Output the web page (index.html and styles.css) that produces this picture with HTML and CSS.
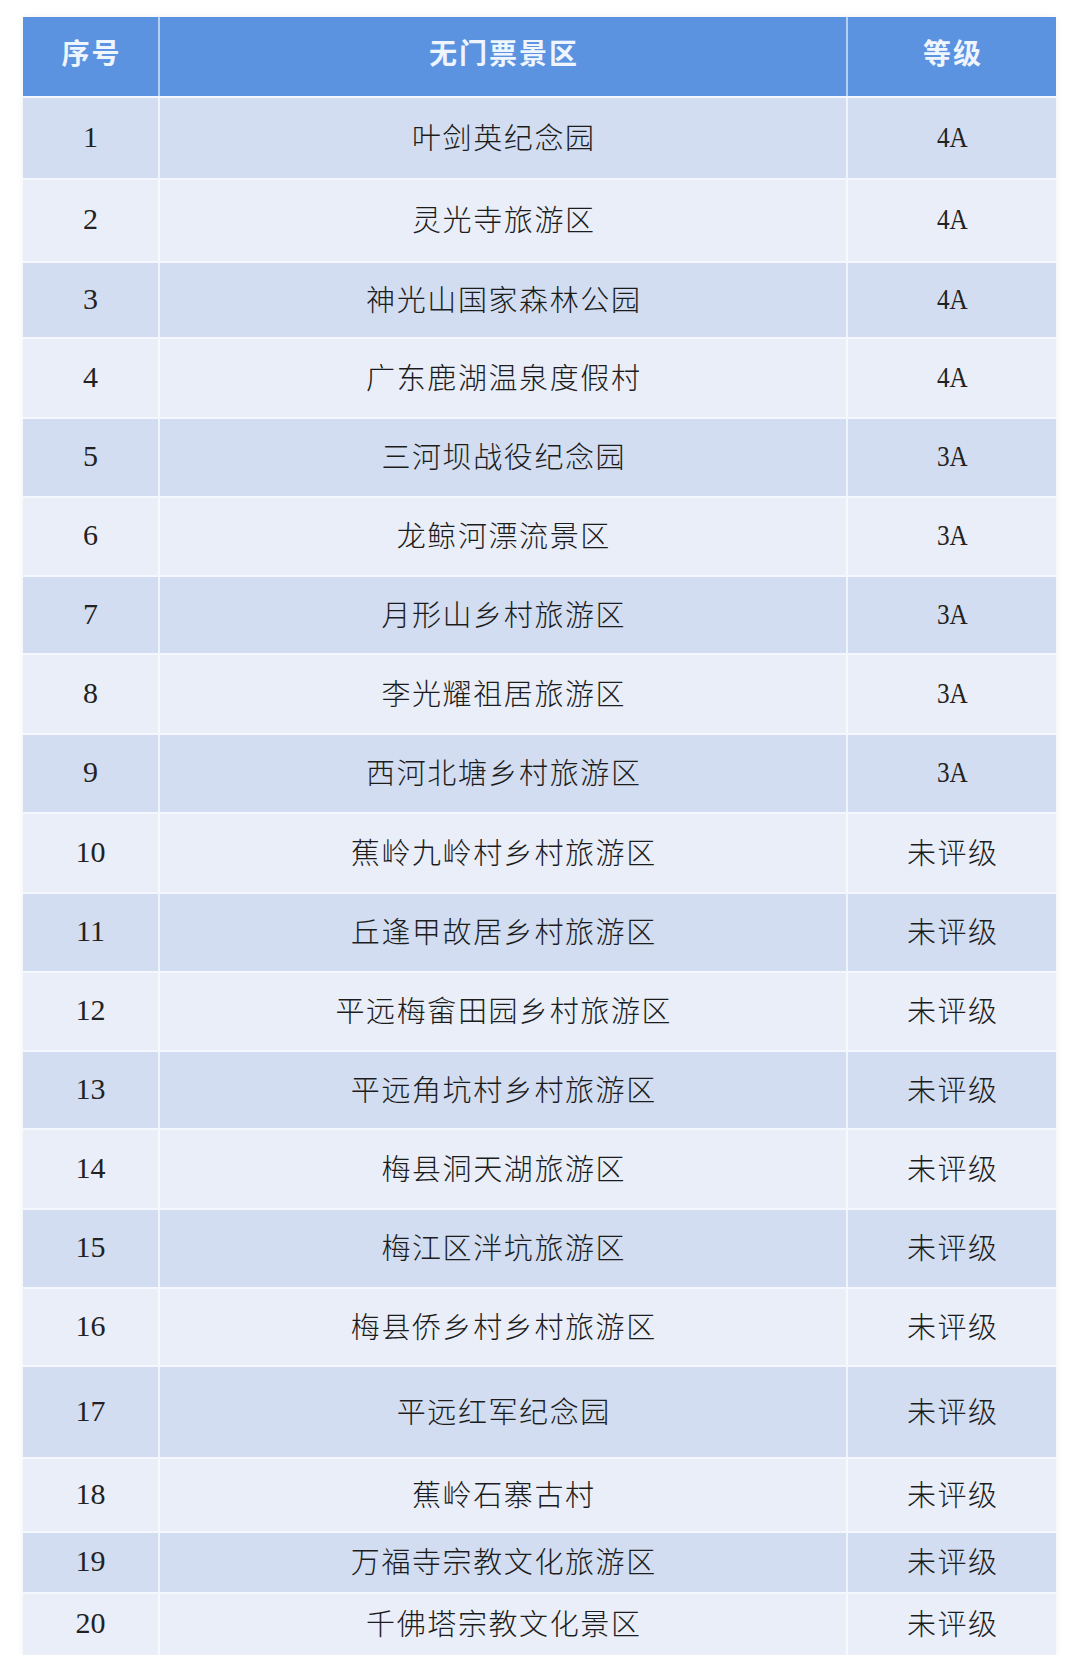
FILE: index.html
```html
<!DOCTYPE html>
<html lang="zh-CN">
<head>
<meta charset="utf-8">
<title>无门票景区</title>
<link rel="stylesheet" href="styles.css">
</head>
<body>
<div class="page">
  <div class="table">
    <div class="row head">
      <div class="cell">序号</div>
      <div class="cell">无门票景区</div>
      <div class="cell">等级</div>
    </div>
    <div class="row dark r1"><div class="cell num">1</div><div class="cell name">叶剑英纪念园</div><div class="cell lv"><span class="lat">4A</span></div></div>
    <div class="row light r2"><div class="cell num">2</div><div class="cell name">灵光寺旅游区</div><div class="cell lv"><span class="lat">4A</span></div></div>
    <div class="row dark r3"><div class="cell num">3</div><div class="cell name">神光山国家森林公园</div><div class="cell lv"><span class="lat">4A</span></div></div>
    <div class="row light r4"><div class="cell num">4</div><div class="cell name">广东鹿湖温泉度假村</div><div class="cell lv"><span class="lat">4A</span></div></div>
    <div class="row dark r5"><div class="cell num">5</div><div class="cell name">三河坝战役纪念园</div><div class="cell lv"><span class="lat">3A</span></div></div>
    <div class="row light r6"><div class="cell num">6</div><div class="cell name">龙鲸河漂流景区</div><div class="cell lv"><span class="lat">3A</span></div></div>
    <div class="row dark r7"><div class="cell num">7</div><div class="cell name">月形山乡村旅游区</div><div class="cell lv"><span class="lat">3A</span></div></div>
    <div class="row light r8"><div class="cell num">8</div><div class="cell name">李光耀祖居旅游区</div><div class="cell lv"><span class="lat">3A</span></div></div>
    <div class="row dark r9"><div class="cell num">9</div><div class="cell name">西河北塘乡村旅游区</div><div class="cell lv"><span class="lat">3A</span></div></div>
    <div class="row light r10"><div class="cell num">10</div><div class="cell name">蕉岭九岭村乡村旅游区</div><div class="cell lv">未评级</div></div>
    <div class="row dark r11"><div class="cell num">11</div><div class="cell name">丘逢甲故居乡村旅游区</div><div class="cell lv">未评级</div></div>
    <div class="row light r12"><div class="cell num">12</div><div class="cell name">平远梅畲田园乡村旅游区</div><div class="cell lv">未评级</div></div>
    <div class="row dark r13"><div class="cell num">13</div><div class="cell name">平远角坑村乡村旅游区</div><div class="cell lv">未评级</div></div>
    <div class="row light r14"><div class="cell num">14</div><div class="cell name">梅县洞天湖旅游区</div><div class="cell lv">未评级</div></div>
    <div class="row dark r15"><div class="cell num">15</div><div class="cell name">梅江区泮坑旅游区</div><div class="cell lv">未评级</div></div>
    <div class="row light r16"><div class="cell num">16</div><div class="cell name">梅县侨乡村乡村旅游区</div><div class="cell lv">未评级</div></div>
    <div class="row dark r17"><div class="cell num">17</div><div class="cell name">平远红军纪念园</div><div class="cell lv">未评级</div></div>
    <div class="row light r18"><div class="cell num">18</div><div class="cell name">蕉岭石寨古村</div><div class="cell lv">未评级</div></div>
    <div class="row dark r19"><div class="cell num">19</div><div class="cell name">万福寺宗教文化旅游区</div><div class="cell lv">未评级</div></div>
    <div class="row light r20"><div class="cell num">20</div><div class="cell name">千佛塔宗教文化景区</div><div class="cell lv">未评级</div></div>
  </div>
</div>
</body>
</html>
```

FILE: styles.css
```css
html, body {
  margin: 0;
  padding: 0;
  background: #ffffff;
}

.page {
  padding: 17px 0 0 23px;
}

.table {
  width: 1033px;
  display: flex;
  flex-direction: column;
  box-shadow: 0 0 6px rgba(90, 110, 150, 0.10);
}

.row {
  display: grid;
  grid-template-columns: 135px 688px 210px;
  height: 79px;
  box-sizing: border-box;
}

.row + .row {
  border-top: 2px solid #f4f7fd;
}

.cell {
  display: flex;
  align-items: center;
  justify-content: center;
  box-sizing: border-box;
  color: #1c1c1c;
  font-family: "Noto Sans CJK SC", "Liberation Serif", serif;
  font-size: 29px;
  font-weight: 300;
  letter-spacing: 1.6px;
  padding-left: 1.6px;
  padding-bottom: 5px;
}

.cell + .cell {
  border-left: 2px solid rgba(250, 252, 255, 0.75);
}

.head {
  height: 79px;
  background: #5b93e1;
}

.head .cell {
  color: #eef5ff;
  font-family: "Noto Sans CJK SC", sans-serif;
  font-weight: 700;
  font-size: 28px;
  letter-spacing: 2px;
  padding-left: 2px;
  padding-bottom: 10px;
}

.head .cell + .cell {
  border-left: 2px solid #b7cff1;
}

.dark {
  background: #d2ddf1;
}

.light {
  background: #e9eef9;
}

.num {
  font-family: "Liberation Serif", serif;
  font-weight: 400;
  font-size: 30px;
  letter-spacing: 0;
  padding-left: 0;
  padding-bottom: 3px;
  color: #222222;
}

.lat {
  display: inline-block;
  font-family: "Liberation Serif", serif;
  font-weight: 400;
  font-size: 30px;
  letter-spacing: 0;
  color: #222222;
  margin-top: 2px;
  transform: scaleX(0.84);
}

.r1 { height: 82px; }
.r2 { height: 83px; }
.r3 { height: 76px; }
.r4 { height: 80px; }
.r7 { height: 78px; }
.r8 { height: 80px; }
.r10 { height: 80px; }
.r13 { height: 78px; }
.r14 { height: 80px; }
.r16 { height: 78px; }
.r17 { height: 92px; }
.r18 { height: 74px; }
.r19 { height: 61px; }
.r20 { height: 63px; }
```
